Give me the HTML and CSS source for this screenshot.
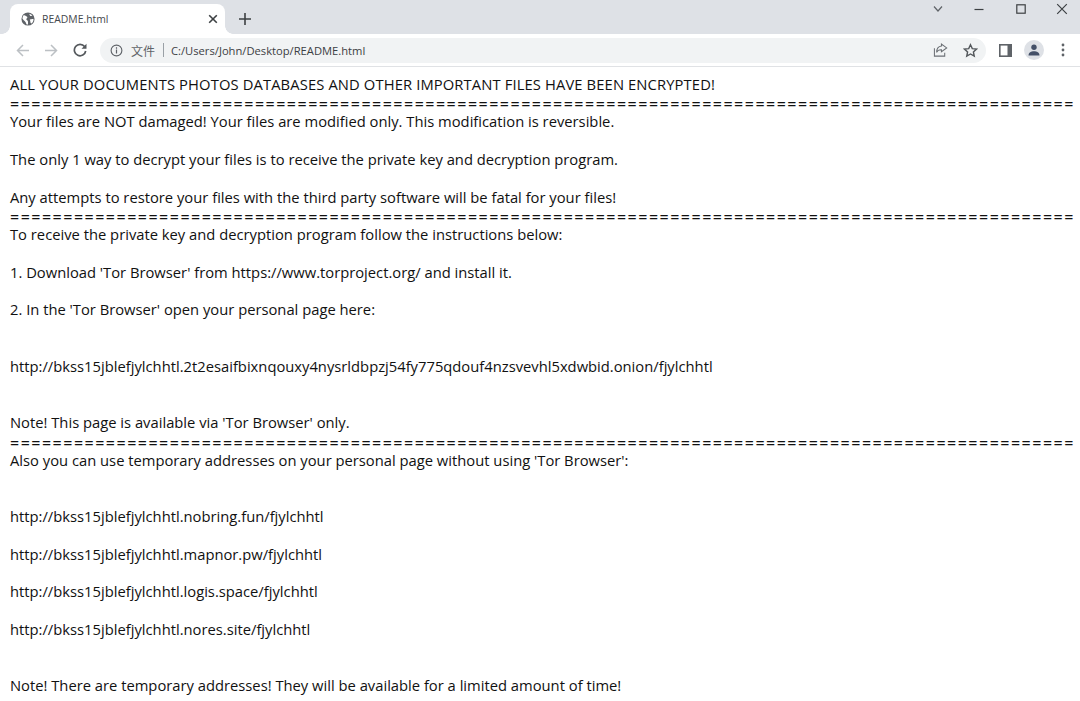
FILE: index.html
```html
<!DOCTYPE html>
<html lang="en">
<head>
<meta charset="utf-8">
<title>README.html</title>
<link rel="stylesheet" href="styles.css">
</head>
<body>
<header class="chrome">
  <div class="tabstrip">
    <div class="tab">
      <svg class="favicon" viewBox="0 0 16 16" width="14" height="14"><circle cx="8" cy="8" r="7.500" fill="#5f6368"/><path d="M3.200 3.400C4.500 3.800 6 4.400 7 5.400c.5.700.2 1.500-.5 2-.6.500-.5 1.300.2 1.800.8.600 1.300 1.200 1.300 2.200v2.800c-.8.100-1.300 0-1.800-.2-.3-1.400-.9-2.700-2-3.700C3.200 9.400 2 8.300 1.600 7.400 1.800 5.800 2.300 4.500 3.200 3.400zM9.500 1.900c1.400.3 2.600 1 3.600 2.100-.9.500-1.900.6-2.700.2-.5-.6-.8-1.400-.9-2.300zM10 8.600c1.500-.6 3-.8 4.300-.5.100 2-.7 3.800-2.200 5.100-.9-.1-1.300-.9-1.400-2-.1-1-.4-1.800-.7-2.600z" fill="#fff"/></svg>
      <span class="tab-title">README.html</span>
      <svg class="tab-close" viewBox="0 0 10 10" width="10" height="10"><path d="M1.200 1.200l7.600 7.600M8.800 1.200l-7.600 7.600" stroke="#3c4043" stroke-width="1.600" fill="none"/></svg>
    </div>
    <svg class="newtab" viewBox="0 0 12 12" width="12" height="12"><path d="M6 0v12M0 6h12" stroke="#3c4043" stroke-width="1.600" fill="none"/></svg>
    <div class="spacer"></div>
    <div class="winctl">
      <svg viewBox="0 0 12 12" width="12" height="12"><path d="M2 3.500l4 4.500 4-4.500" stroke="#5f6368" stroke-width="1.200" fill="none"/></svg>
      <svg viewBox="0 0 12 12" width="12" height="12"><path d="M1.500 6.500h9" stroke="#3c4043" stroke-width="1.200" fill="none"/></svg>
      <svg viewBox="0 0 12 12" width="12" height="12"><rect x="1.800" y="1.800" width="8.400" height="8.400" fill="none" stroke="#3c4043" stroke-width="1.200"/></svg>
      <svg viewBox="0 0 12 12" width="12" height="12"><path d="M1.200 1.200l9.600 9.600M10.800 1.200l-9.600 9.600" stroke="#3c4043" stroke-width="1.200" fill="none"/></svg>
    </div>
  </div>
  <div class="toolbar">
    <svg class="nav" viewBox="0 0 13 13" width="13" height="13"><path d="M13 6.500H1.500M7 1L1.500 6.500 7 12" stroke="#bcc0c4" stroke-width="1.500" fill="none"/></svg>
    <svg class="nav" viewBox="0 0 13 13" width="13" height="13"><path d="M0 6.500h11.500M6 1l5.500 5.500L6 12" stroke="#bcc0c4" stroke-width="1.500" fill="none"/></svg>
    <svg class="reload" viewBox="0 0 14 14" width="14" height="14"><path d="M11.600 3.600A5.700 5.700 0 1 0 12.700 8" stroke="#54585c" stroke-width="1.700" fill="none"/><path d="M13.500.8v5h-5z" fill="#54585c"/></svg>
    <div class="omnibox">
      <svg viewBox="0 0 14 14" width="13" height="13"><circle cx="7" cy="7" r="5.800" fill="none" stroke="#5f6368" stroke-width="1.200"/><path d="M7 6v4.200M7 3.600v1.400" stroke="#5f6368" stroke-width="1.300" fill="none"/></svg>
      <span class="scheme">文件</span>
      <span class="divider"></span>
      <span class="url">C:/Users/John/Desktop/README.html</span>
      <span class="spacer"></span>
      <svg class="share" viewBox="0 0 16 16" width="15" height="15"><path d="M9 3.200v-2l5.600 4L9 9.200V7.100C6.200 7 4.700 8 3.900 10 3.900 6 5.700 3.600 9 3.200z M1.500 5.500v8.500h11V10.500" fill="none" stroke="#6b6f74" stroke-width="1.100"/></svg>
      <svg class="star" viewBox="0 0 16 16" width="15" height="15"><path d="M8 1.900l1.900 4.100 4.500.5-3.300 3 .9 4.500L8 11.700 4 14l.9-4.500-3.300-3 4.500-.5z" fill="none" stroke="#54585c" stroke-width="1.500"/></svg>
    </div>
    <svg class="sidepanel" viewBox="0 0 13 13" width="13" height="13"><path d="M0 0h13v13H0z" fill="#5f6368"/><path d="M1.600 1.600H8.500v9.800H1.600z" fill="#fff"/></svg>
    <div class="avatar"><svg viewBox="0 0 12 12" width="12" height="12"><circle cx="6" cy="3.200" r="2.700" fill="#445068"/><path d="M.5 11.500c0-3 2.700-4.300 5.500-4.300s5.500 1.300 5.500 4.300z" fill="#445068"/></svg></div>
    <svg class="menu" viewBox="0 0 4 14" width="4" height="14"><circle cx="2" cy="2" r="1.400" fill="#5f6368"/><circle cx="2" cy="7" r="1.400" fill="#5f6368"/><circle cx="2" cy="12" r="1.400" fill="#5f6368"/></svg>
  </div>
</header>
<main class="note">
<div class="lines"><span class="caps">ALL YOUR DOCUMENTS PHOTOS DATABASES AND OTHER IMPORTANT FILES HAVE BEEN ENCRYPTED!</span></div>
<div class="rule">====================================================================================================</div>
<div class="lines">Your files are NOT damaged! Your files are modified only. This modification is reversible.

The only 1 way to decrypt your files is to receive the private key and decryption program.

Any attempts to restore your files with the third party software will be fatal for your files!</div>
<div class="rule">====================================================================================================</div>
<div class="lines">To receive the private key and decryption program follow the instructions below:

1. Download 'Tor Browser' from https://www.torproject.org/ and install it.

2. In the 'Tor Browser' open your personal page here:


http://bkss15jblefjylchhtl.2t2esaifbixnqouxy4nysrldbpzj54fy775qdouf4nzsvevhl5xdwbid.onion/fjylchhtl


Note! This page is available via 'Tor Browser' only.</div>
<div class="rule">====================================================================================================</div>
<div class="lines">Also you can use temporary addresses on your personal page without using 'Tor Browser':


http://bkss15jblefjylchhtl.nobring.fun/fjylchhtl

http://bkss15jblefjylchhtl.mapnor.pw/fjylchhtl

http://bkss15jblefjylchhtl.logis.space/fjylchhtl

http://bkss15jblefjylchhtl.nores.site/fjylchhtl


Note! There are temporary addresses! They will be available for a limited amount of time!</div>
</main>
</body>
</html>
```
FILE: styles.css
```css
html, body { margin: 0; padding: 0; background: #fff; overflow: hidden; height: 701px; }
body { font-family: "Open Sans", sans-serif; }
.chrome { display: flex; flex-direction: column; }
.tabstrip { display: flex; align-items: flex-start; height: 34px; background: #dee1e6; padding-top: 4px; padding-left: 10px; box-sizing: border-box; }
.tab { position: relative; display: flex; align-items: center; width: 215px; height: 30px; background: #fff; border-radius: 8px 8px 0 0; box-sizing: border-box; padding: 0 7px 0 11px; }
.tab::before, .tab::after { content: ""; position: absolute; bottom: 0; width: 8px; height: 8px; }
.tab::before { left: -8px; background: radial-gradient(circle at 0 0, #dee1e6 7.500px, #fff 8px); }
.tab::after { right: -8px; background: radial-gradient(circle at 100% 0, #dee1e6 7.500px, #fff 8px); }
.tab-title { font: 10.400px "Open Sans", sans-serif; color: #45494e; margin-left: 7px; flex: 1; }
.newtab { margin: 9px 0 0 14px; }
.spacer { flex: 1; }
.winctl { display: flex; gap: 29.300px; margin-top: -1px; padding-right: 12px; }
.toolbar { display: flex; align-items: center; height: 32px; background: #fff; border-bottom: 1px solid #e0e2e5; padding-left: 16px; }
.nav { margin-right: 16px; }
.reload { margin: 0 13px 0 -1px; }
.omnibox { display: flex; align-items: center; width: 886px; height: 25px; background: #f1f3f4; border-radius: 13px; box-sizing: border-box; padding: 0 8.500px 0 10px; }
.scheme { font: 12px "Noto Sans CJK SC", sans-serif; color: #5f6368; margin-left: 8px; }
.divider { width: 1px; height: 14px; background: #9aa0a6; margin: 0 7px 0 8px; }
.url { font: 11.200px "Open Sans", sans-serif; color: #3c4043; }
.star { margin-left: 15px; }
.sidepanel { margin-left: 13px; }
.avatar { display: flex; align-items: center; justify-content: center; width: 20px; height: 20px; border-radius: 50%; background: #dee1e6; margin-left: 12px; }
.menu { margin-left: 17px; }
.note { padding: 7.900px 0 0 10px; font-size: 14.750px; line-height: 18.800px; color: #111; }
.lines, .rule { white-space: pre; }
.caps { letter-spacing: .12px; }
.rule { font-size: 16px; letter-spacing: 1.5px; height: 17.300px; padding-top: 1.500px; }
```
